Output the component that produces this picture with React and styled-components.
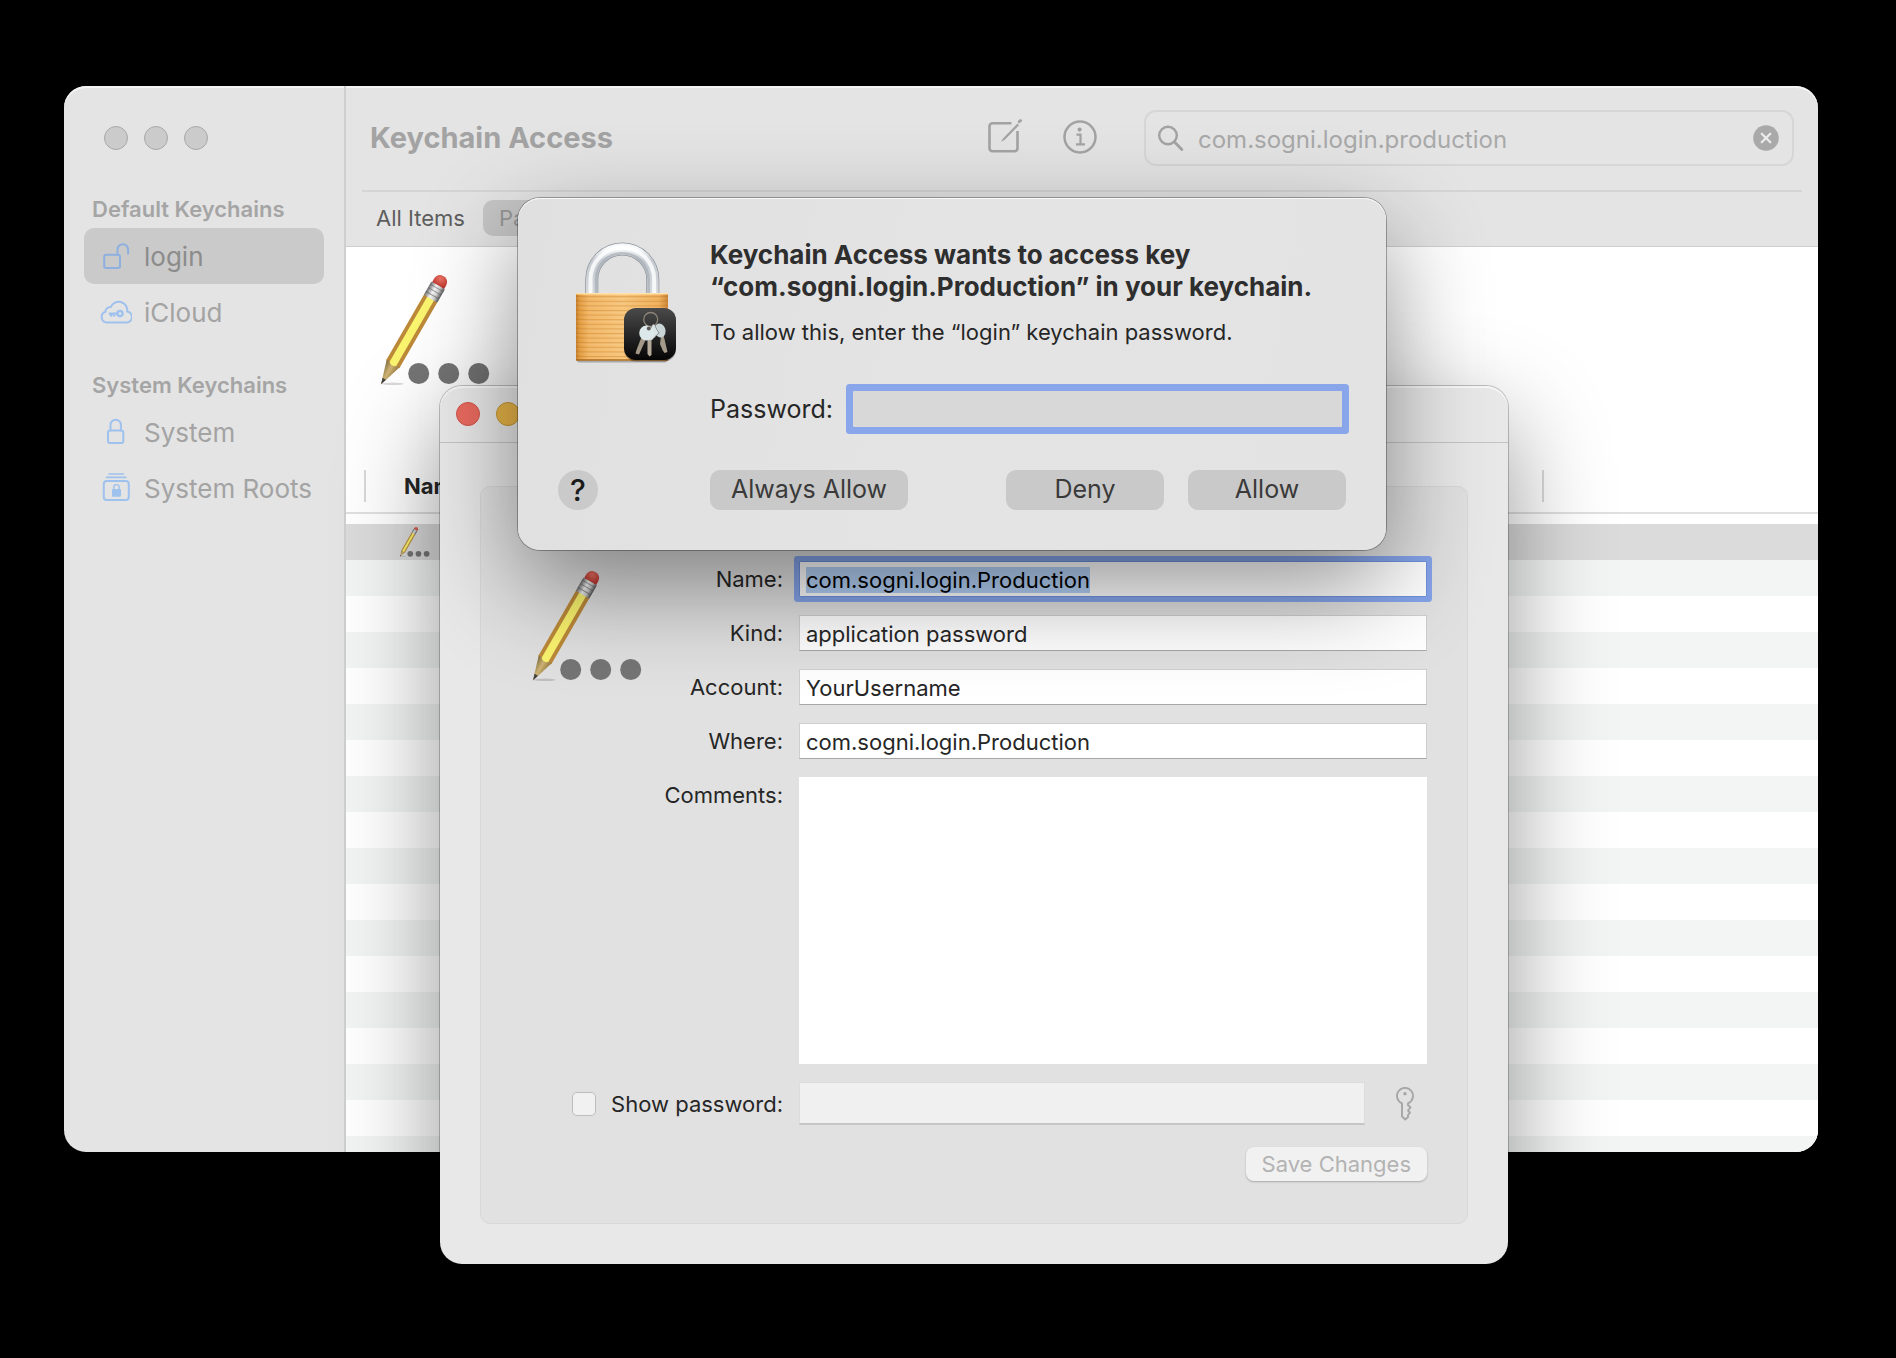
import React, { useEffect, useRef } from 'react';
import styled, { createGlobalStyle } from 'styled-components';

const ROW_COUNT = 18;

function PencilIcon({ size }) {
  return (
    <svg width={size} height={size} viewBox="0 0 110 110" aria-hidden="true">
      <defs>
        <linearGradient id="ferrule" x1="0" x2="1">
          <stop offset="0" stopColor="#6d6d6d" />
          <stop offset="0.4" stopColor="#f7f7f7" />
          <stop offset="0.7" stopColor="#cfcfcf" />
          <stop offset="1" stopColor="#555" />
        </linearGradient>
        <radialGradient id="eraser" cx="0.4" cy="0.3" r="0.8">
          <stop offset="0" stopColor="#ee7467" />
          <stop offset="1" stopColor="#b52c25" />
        </radialGradient>
        <linearGradient id="wood" x1="0" x2="1">
          <stop offset="0" stopColor="#7d6a3c" />
          <stop offset="0.5" stopColor="#d0b576" />
          <stop offset="1" stopColor="#94773d" />
        </linearGradient>
      </defs>
      <ellipse cx="12" cy="108.800" rx="11" ry="1.200" fill="#000" opacity="0.15" />
      <g transform="translate(0 109.500) rotate(30)">
        <path d="M0 0 L-7.700 -25 L7.700 -25 Z" fill="url(#wood)" />
        <path d="M0 0 L-2 -6.500 L2 -6.500 Z" fill="#444" />
        <path d="M-7.700 -23 Q-5.800 -26 -3.900 -24 Q0 -20 3.900 -24 Q5.800 -26 7.700 -23 V-100 H-7.700 Z" fill="#bd8a39" />
        <path d="M-3.900 -24 Q0 -20 3.900 -24 V-100 H-3.900 Z" fill="#fbf46f" />
        <path d="M-6.900 -113 V-118 Q-6.500 -125 0 -125 Q6.500 -125 6.900 -118 V-113 Z" fill="url(#eraser)" />
        <rect x="-7.800" y="-114.500" width="15.600" height="15.500" rx="1" fill="url(#ferrule)" />
        <path d="M-7.500 -111.500 H7.500 M-7.500 -107.500 H7.500 M-7.500 -103 H7.500" stroke="#555" strokeWidth="1" opacity="0.55" />
      </g>
      <circle cx="37.700" cy="98.500" r="10.500" fill="#757575" />
      <circle cx="67.700" cy="98.500" r="10.500" fill="#757575" />
      <circle cx="97.700" cy="98.500" r="10.500" fill="#757575" />
    </svg>
  );
}

function PadlockIcon() {
  return (
    <svg width="102" height="124" viewBox="0 0 102 124" aria-hidden="true">
      <defs>
        <linearGradient id="brass" x1="0" x2="1">
          <stop offset="0" stopColor="#c47a25" />
          <stop offset="0.040" stopColor="#e29b3f" />
          <stop offset="0.140" stopColor="#f3b765" />
          <stop offset="0.500" stopColor="#f8c67c" />
          <stop offset="0.900" stopColor="#f0b05a" />
          <stop offset="1" stopColor="#c98130" />
        </linearGradient>
        <pattern id="grooves" width="8" height="4.600" patternUnits="userSpaceOnUse">
          <rect width="8" height="1.300" fill="#b8701c" opacity="0.35" />
          <rect y="1.300" width="8" height="1" fill="#fff" opacity="0.12" />
        </pattern>
        <linearGradient id="steel" x1="0" y1="0" x2="0" y2="1">
          <stop offset="0" stopColor="#f6f8fa" />
          <stop offset="0.250" stopColor="#c6cbd1" />
          <stop offset="1" stopColor="#d6dade" />
        </linearGradient>
        <linearGradient id="badge" x1="0" y1="0" x2="0" y2="1">
          <stop offset="0" stopColor="#4a4a4a" />
          <stop offset="1" stopColor="#050505" />
        </linearGradient>
      </defs>
      <g fill="none">
        <path d="M16.800 54V38.500a30.500 30.500 0 0 1 61 0V54" stroke="#8d949c" strokeWidth="13" />
        <path d="M16.800 54V38.500a30.500 30.500 0 0 1 61 0V54" stroke="url(#steel)" strokeWidth="11.600" />
        <path d="M21 54V38.500a26.300 26.300 0 0 1 52.600 0V54" stroke="#9ea5ad" strokeWidth="2.600" opacity="0.6" />
        <path d="M15.500 54V38.500a31.800 31.800 0 0 1 63.600 0V54" stroke="#fff" strokeWidth="4" opacity="0.8" />
      </g>
      <rect x="2" y="117" width="90" height="4.500" rx="2" fill="#000" opacity="0.25" />
      <rect x="1" y="52" width="92" height="67.500" rx="1" fill="url(#brass)" />
      <rect x="1" y="55" width="92" height="63" fill="url(#grooves)" />
      <rect x="1" y="52" width="92" height="1.500" fill="#ffe3ae" />
      <rect x="1" y="118.300" width="92" height="1.300" fill="#a86518" />
      <rect x="49" y="68.500" width="52" height="52" rx="12" fill="#000" opacity="0.3" />
      <rect x="49" y="67" width="52" height="52" rx="12" fill="url(#badge)" />
      <circle cx="75.700" cy="78.500" r="7" fill="none" stroke="#8b8378" strokeWidth="1.300" />
      <path d="M86 95 L88.500 94 L92.500 111 L89.500 112 L87.500 109 L85 103 Z" fill="#a59b8b" />
      <ellipse cx="85" cy="89.500" rx="5.500" ry="7" fill="#c9d4d6" transform="rotate(-18 85 89.500)" />
      <path d="M72.500 94 H76.500 V114 L74.500 115.500 L72.500 113 Z" fill="#b5ab9b" />
      <path d="M78 83 L83 87 L84 91 L77 99 L72 98 Z" fill="#dbe5e6" />
      <path d="M66.500 96 L71 98 L64 113.500 L60.500 112.500 L61.500 109 Z" fill="#a39887" />
      <ellipse cx="71.500" cy="92" rx="7.300" ry="7.500" fill="#dce8e9" />
      <circle cx="73.800" cy="87.500" r="2" fill="#5a5651" />
      <path d="M80 85 L84 92 L79 97" fill="none" stroke="#7b8588" strokeWidth="0.900" />
    </svg>
  );
}

function OpenLockIcon() {
  return (
    <LineIcon viewBox="0 0 32 32" $color="#8db0e0" aria-hidden="true">
      <rect x="4.200" y="14.700" width="15.800" height="13.300" rx="2" />
      <path d="M17.500 14.700V9.500a5.300 5.300 0 0 1 10.600 0V13.500" />
    </LineIcon>
  );
}

function CloudKeyIcon() {
  return (
    <LineIcon viewBox="0 0 32 32" aria-hidden="true">
      <path d="M7 26.500h18.500a5.500 5.500 0 0 0 1.700-11 8.600 8.600 0 0 0-16.400-4.600 5 5 0 0 0-5.400 4.900A5.500 5.500 0 0 0 7 26.500z" />
      <circle cx="20" cy="17.600" r="2.600" strokeWidth="2.400" />
      <path d="M17 17.600H9.800M11 18v1.500M14 18v1.500" strokeWidth="2.400" />
    </LineIcon>
  );
}

function LockIcon() {
  return (
    <LineIcon viewBox="0 0 32 32" aria-hidden="true">
      <rect x="8" y="14.500" width="15.300" height="12.500" rx="2" />
      <path d="M10.500 14.500V9a5.200 5.200 0 0 1 10.400 0v5.500" />
    </LineIcon>
  );
}

function LockStackIcon() {
  return (
    <LineIcon viewBox="0 0 32 32" aria-hidden="true">
      <path d="M9 2h14.500M6.500 5.400h19.500" strokeWidth="1.600" />
      <rect x="3.800" y="9" width="25" height="19" rx="3" />
      <rect x="12" y="17" width="9" height="7.800" rx="1" fill="#9fc1ee" stroke="none" />
      <path d="M13.800 17.500v-2.200a2.700 2.700 0 0 1 5.400 0v2.200" strokeWidth="1.400" />
    </LineIcon>
  );
}

function ComposeIcon() {
  return (
    <svg width="36" height="36" viewBox="0 0 36 36" fill="none" stroke="#a3a3a3" strokeWidth="2.600" aria-hidden="true">
      <path d="M24.500 4.300H5.500a3 3 0 0 0-3 3v22a3 3 0 0 0 3 3h22a3 3 0 0 0 3-3V12" />
      <path d="M30.500 4.500L16 19.500l-2 3.200 3.500-1.700L32 6.200z" fill="#a3a3a3" stroke="none" />
      <path d="M32.300 2.700l1.200-1" strokeWidth="3" strokeLinecap="round" />
    </svg>
  );
}

function InfoIcon() {
  return (
    <svg width="34" height="34" viewBox="0 0 34 34" fill="none" stroke="#a3a3a3" strokeWidth="2.500" aria-hidden="true">
      <circle cx="17" cy="17" r="15.500" />
      <circle cx="16.600" cy="9.600" r="2.100" fill="#a3a3a3" stroke="none" />
      <path d="M13.500 14.700h4v9.500M13 24.400h9" strokeWidth="2.200" />
    </svg>
  );
}

function SearchIcon() {
  return (
    <svg width="26" height="26" viewBox="0 0 26 26" fill="none" stroke="#a3a3a3" strokeWidth="2.400" strokeLinecap="round" aria-hidden="true">
      <circle cx="10" cy="10.500" r="8.800" />
      <path d="M16.500 17l7.300 7.500" strokeWidth="2.800" />
    </svg>
  );
}

function ClearIcon() {
  return (
    <svg width="26" height="26" viewBox="0 0 26 26" aria-hidden="true">
      <circle cx="13" cy="13" r="12.800" fill="#a9a9a9" />
      <path d="M8.700 8.700l8.600 8.600M17.300 8.700l-8.600 8.600" stroke="#ececec" strokeWidth="2.200" strokeLinecap="round" />
    </svg>
  );
}

function KeyIcon() {
  return (
    <svg width="20" height="34" viewBox="0 0 20 34" fill="none" stroke="#a6a6a6" strokeWidth="1.900" strokeLinejoin="round" aria-hidden="true">
      <path d="M7 16.300A8 8 0 1 1 13 16.300V18l2.500 2.500-2.500 3 2 2.200-2 2.300v2L10.300 32.500 7 29.500z" />
      <circle cx="10" cy="6.800" r="1.700" fill="#a6a6a6" stroke="none" />
    </svg>
  );
}

function Sidebar() {
  return (
    <SidebarPane>
      <Lights>
        <Light $color="#cbcbcb" $edge="#a9a9a9" />
        <Light $color="#cbcbcb" $edge="#a9a9a9" />
        <Light $color="#cbcbcb" $edge="#a9a9a9" />
      </Lights>
      <SidebarGroup>
        <SidebarHeading>Default Keychains</SidebarHeading>
        <SidebarItem $selected><OpenLockIcon />login</SidebarItem>
        <SidebarItem><CloudKeyIcon />iCloud</SidebarItem>
      </SidebarGroup>
      <SidebarGroup>
        <SidebarHeading>System Keychains</SidebarHeading>
        <SidebarItem><LockIcon />System</SidebarItem>
        <SidebarItem><LockStackIcon />System Roots</SidebarItem>
      </SidebarGroup>
    </SidebarPane>
  );
}

function MainWindow() {
  return (
    <MainFrame>
      <Sidebar />
      <Content>
        <Toolbar>
          <Title>Keychain Access</Title>
          <Tools>
            <ToolButton aria-label="New item"><ComposeIcon /></ToolButton>
            <ToolButton aria-label="Item info"><InfoIcon /></ToolButton>
          </Tools>
          <SearchBox>
            <SearchIcon />
            <SearchInput aria-label="Search" defaultValue="com.sogni.login.production" />
            <ToolButton aria-label="Clear search"><ClearIcon /></ToolButton>
          </SearchBox>
        </Toolbar>
        <Tabs>
          <Tab>All Items</Tab>
          <Tab $selected>Passwords</Tab>
        </Tabs>
        <Preview>
          <PencilIcon size={110} />
        </Preview>
        <Table>
          <thead>
            <tr>
              <Th $width="18px" />
              <Th><HeadCell>Name</HeadCell></Th>
              <Th $width="276px"><HeadCell /></Th>
            </tr>
          </thead>
          <tbody>
            <SpacerRow><td colSpan="3" /></SpacerRow>
            {Array.from({ length: ROW_COUNT }, (_, i) => (
              <Row key={i} $selected={i === 0}>
                <td />
                <td>{i === 0 && <RowIcon><PencilIcon size={30} /></RowIcon>}</td>
                <td />
              </Row>
            ))}
          </tbody>
        </Table>
      </Content>
    </MainFrame>
  );
}

function DetailWindow() {
  const nameRef = useRef(null);

  useEffect(() => {
    nameRef.current.focus({ preventScroll: true });
    nameRef.current.select();
  }, []);

  return (
    <DetailFrame>
      <TitleBar>
        <Light $color="#ea6a5f" $edge="#d0524a" />
        <Light $color="#e8b548" $edge="#c4942f" />
        <Light $color="#61c454" $edge="#4fa443" />
      </TitleBar>
      <DetailBody>
        <Group>
          <GroupIcon><PencilIcon size={110} /></GroupIcon>
          <FieldLabel htmlFor="name" $row={1}>Name:</FieldLabel>
          <Field id="name" ref={nameRef} $focused defaultValue="com.sogni.login.Production" />
          <FieldLabel htmlFor="kind" $row={2}>Kind:</FieldLabel>
          <Field id="kind" defaultValue="application password" />
          <FieldLabel htmlFor="account" $row={3}>Account:</FieldLabel>
          <Field id="account" defaultValue="YourUsername" />
          <FieldLabel htmlFor="where" $row={4}>Where:</FieldLabel>
          <Field id="where" defaultValue="com.sogni.login.Production" />
          <FieldLabel htmlFor="comments" $row={5}>Comments:</FieldLabel>
          <Comments id="comments" />
          <CheckLabel>
            <Checkbox type="checkbox" />
            Show password:
          </CheckLabel>
          <SecretRow>
            <SecretField type="password" aria-label="Item password" disabled />
            <ToolButton aria-label="Password assistant"><KeyIcon /></ToolButton>
          </SecretRow>
          <SaveButton disabled>Save Changes</SaveButton>
        </Group>
      </DetailBody>
    </DetailFrame>
  );
}

function AccessDialog() {
  return (
    <DialogFrame role="dialog" aria-labelledby="dialog-title">
      <DialogSide>
        <PadlockIcon />
        <HelpButton aria-label="Help">?</HelpButton>
      </DialogSide>
      <DialogMain>
        <DialogTitle id="dialog-title">
          Keychain Access wants to access key<br />
          “com.sogni.login.Production” in your keychain.
        </DialogTitle>
        <DialogText>To allow this, enter the “login” keychain password.</DialogText>
        <PasswordRow>
          <label htmlFor="password">Password:</label>
          <PasswordInput id="password" type="password" />
        </PasswordRow>
        <Buttons>
          <DialogButton $wide>Always Allow</DialogButton>
          <Spacer />
          <DialogButton>Deny</DialogButton>
          <DialogButton>Allow</DialogButton>
        </Buttons>
      </DialogMain>
    </DialogFrame>
  );
}

function App() {
  return (
    <Desktop>
      <GlobalStyle />
      <MainWindow />
      <DetailWindow />
      <AccessDialog />
    </Desktop>
  );
}

const GlobalStyle = createGlobalStyle`
  * {
    box-sizing: border-box;
  }

  body {
    margin: 0;
    background: #000;
    font-family: Inter, "Liberation Sans", sans-serif;
    font-size: 22px;
    color: #262626;
  }

  button, input, textarea {
    font: inherit;
    color: inherit;
    outline: none;
  }
`;

const Desktop = styled.main`
  position: relative;
  min-height: 100vh;
  overflow: hidden;
`;

const Frame = styled.section`
  position: absolute;
  border-radius: 22px;
  overflow: hidden;
`;

const MainFrame = styled(Frame)`
  inset: 86px 78px 206px 64px;
  display: flex;
  background: #e4e4e4;
  box-shadow: inset 0 2px 0 #f4f4f4;
`;

const SidebarPane = styled.nav`
  flex: none;
  width: 282px;
  padding: 40px 20px;
  border-right: 2px solid #cfcfcf;
  display: flex;
  flex-direction: column;
  gap: 26px;
`;

const Lights = styled.div`
  display: flex;
  gap: 16px;
  padding: 0 20px 14px;
`;

const Light = styled.span`
  width: 24px;
  height: 24px;
  border-radius: 50%;
  background: ${(props) => props.$color};
  border: 1px solid ${(props) => props.$edge};
`;

const SidebarGroup = styled.div`
  display: flex;
  flex-direction: column;
`;

const SidebarHeading = styled.h2`
  margin: 0;
  padding-left: 8px;
  line-height: 38px;
  font-size: 22px;
  font-weight: 600;
  color: #a5a5a5;
`;

const SidebarItem = styled.button`
  display: flex;
  align-items: center;
  gap: 12px;
  height: 56px;
  padding: 0 12px 0 16px;
  border: 0;
  border-radius: 10px;
  font-size: 26px;
  white-space: nowrap;
  background: ${(props) => (props.$selected ? '#cacaca' : 'transparent')};
  color: ${(props) => (props.$selected ? '#8c8c8c' : '#a3a3a3')};
`;

const LineIcon = styled.svg`
  flex: none;
  width: 32px;
  height: 32px;
  fill: none;
  stroke: ${(props) => props.$color || '#9fc1ee'};
  stroke-width: 2;
  stroke-linecap: round;
`;

const Content = styled.div`
  flex: 1;
  min-width: 0;
`;

const Toolbar = styled.header`
  display: flex;
  align-items: center;
  height: 106px;
  margin: 0 16px;
  padding: 0 8px;
  border-bottom: 2px solid #d5d5d5;
`;

const Title = styled.h1`
  flex: 1;
  margin: 0;
  padding-bottom: 2px;
  font-size: 29px;
  font-weight: 700;
  color: #a3a3a3;
`;

const Tools = styled.div`
  display: flex;
  align-items: center;
  gap: 40px;
  margin-right: 47px;
  padding-bottom: 2px;
`;

const ToolButton = styled.button`
  display: flex;
  padding: 0;
  border: 0;
  background: none;
`;

const SearchBox = styled.div`
  display: flex;
  align-items: center;
  gap: 14px;
  flex: 0 1 650px;
  height: 56px;
  padding: 0 13px 0 12px;
  border: 2px solid #d6d6d6;
  border-radius: 12px;
`;

const SearchInput = styled.input`
  flex: 1;
  min-width: 0;
  padding: 2px 0 0;
  border: 0;
  background: none;
  font-size: 24px;
  color: #a9a9a9;
`;

const Tabs = styled.div`
  display: flex;
  align-items: center;
  gap: 2px;
  height: 55px;
  padding: 0 14px 2px;
  border-bottom: 1px solid #cfcfcf;
`;

const Tab = styled.button`
  height: 36px;
  padding: 0 16px;
  border: 0;
  border-radius: 10px;
  font-size: 22px;
  background: ${(props) => (props.$selected ? '#c6c6c6' : 'none')};
  color: ${(props) => (props.$selected ? '#969696' : '#5e5e5e')};
`;

const Preview = styled.div`
  height: 213px;
  padding: 28px 35px;
  background: #fff;
`;

const Table = styled.table`
  width: 100%;
  table-layout: fixed;
  border-collapse: separate;
  border-spacing: 0;
  background: #fff;
`;

const Th = styled.th`
  width: ${(props) => props.$width || 'auto'};
  height: 54px;
  padding: 0;
  border-bottom: 2px solid #e0e0e0;
`;

const HeadCell = styled.div`
  height: 32px;
  padding-left: 38px;
  border-left: 2px solid #d9d9d9;
  line-height: 32px;
  font-size: 22px;
  font-weight: 700;
  text-align: left;
`;

const SpacerRow = styled.tr`
  height: 10px;

  td {
    padding: 0;
  }
`;

const Row = styled.tr`
  height: 36px;
  background: ${(props) => (props.$selected ? '#dbdbdb' : '#fff')};

  &:nth-child(odd) {
    background: #f3f5f5;
  }

  td {
    padding: 0;
  }
`;

const RowIcon = styled.div`
  display: flex;
  padding-left: 36px;
`;

const DetailFrame = styled(Frame)`
  top: 386px;
  left: 440px;
  right: 388px;
  background: #e8e8e8;
  box-shadow:
    inset 0 2px 0 #f6f6f6,
    0 0 0 1px rgba(0, 0, 0, 0.22),
    0 36px 100px rgba(0, 0, 0, 0.42);
`;

const TitleBar = styled.header`
  display: flex;
  align-items: center;
  gap: 16px;
  height: 57px;
  padding: 0 16px;
  border-bottom: 1px solid #c4c4c4;
`;

const DetailBody = styled.div`
  padding: 43px 40px 40px;
`;

const Group = styled.form`
  display: grid;
  grid-template-columns: 302px 1fr;
  grid-template-rows: repeat(4, 36px) auto auto auto;
  gap: 18px 16px;
  padding: 74px 40px 42px 0;
  border: 1px solid #d8d8d8;
  border-radius: 10px;
  background: #e1e1e1;
`;

const GroupIcon = styled.div`
  grid-area: 1 / 1 / span 4 / span 1;
  padding: 10px 52px;
`;

const FieldLabel = styled.label`
  grid-column: 1;
  grid-row: ${(props) => props.$row};
  justify-self: end;
  line-height: 36px;
`;

const Field = styled.input`
  grid-column: 2;
  min-width: 0;
  width: 100%;
  height: 36px;
  padding: 4px 6px 3px;
  border: 1px solid #cfcfcf;
  border-bottom-color: #a8a8a8;
  background: #fff;
  ${(props) => props.$focused && `
    border-color: #6f92dd;
    border-radius: 1px;
    box-shadow: 0 0 0 5px #85a4ea;
  `}

  &::selection {
    background: #b3d0f5;
    color: #000;
  }
`;

const Comments = styled.textarea`
  grid-column: 2;
  min-width: 0;
  width: 100%;
  height: 287px;
  padding: 4px 6px;
  border: 0;
  background: #fff;
  resize: none;
`;

const CheckLabel = styled.label`
  grid-column: 1;
  display: flex;
  align-items: center;
  justify-content: flex-end;
  gap: 15px;
`;

const Checkbox = styled.input`
  appearance: none;
  width: 24px;
  height: 24px;
  margin: 0;
  border: 1px solid #bdbdbd;
  border-radius: 5px;
  background: #f1f1f1;
`;

const SecretRow = styled.div`
  grid-column: 2;
  display: flex;
  align-items: center;
  gap: 30px;
  padding-right: 12px;
`;

const SecretField = styled.input`
  flex: 1;
  min-width: 0;
  height: 43px;
  padding: 4px 6px;
  border: 1px solid #dcdcdc;
  border-bottom: 2px solid #c6c6c6;
  background: #f0f0f0;
`;

const SaveButton = styled.button`
  grid-column: 2;
  justify-self: end;
  height: 34px;
  margin-top: 4px;
  padding: 0 16px;
  border: 0;
  border-radius: 8px;
  background: #f1f1f1;
  color: #b3b3b3;
  box-shadow: 0 1px 2px rgba(0, 0, 0, 0.25);
`;

const DialogFrame = styled(Frame)`
  top: 198px;
  left: 518px;
  right: 510px;
  display: flex;
  gap: 33px;
  padding: 41px 36px 40px 40px;
  background: linear-gradient(100deg, #dfe0df, #e4e4e4 50%, #e3e3e3);
  box-shadow:
    inset 0 1px 0 #f8f8f8,
    0 0 0 1px rgba(0, 0, 0, 0.3),
    0 36px 100px rgba(0, 0, 0, 0.44);
`;

const DialogSide = styled.div`
  flex: none;
  display: flex;
  flex-direction: column;
  justify-content: space-between;
  padding-top: 2px;

  svg {
    margin-left: 17px;
  }
`;

const HelpButton = styled.button`
  width: 40px;
  height: 40px;
  padding: 0;
  border: 0;
  border-radius: 50%;
  background: #cacaca;
  font-size: 30px;
  font-weight: 500;
  line-height: 40px;
  color: #1c1c1c;
`;

const DialogMain = styled.div`
  flex: 1;
  min-width: 0;
  display: flex;
  flex-direction: column;
`;

const DialogTitle = styled.h2`
  margin: 0;
  font-size: 26px;
  font-weight: 700;
  line-height: 32px;
  color: #2e2e2e;
`;

const DialogText = styled.p`
  margin: 13px 0 0;
  line-height: 32px;
`;

const PasswordRow = styled.div`
  display: flex;
  align-items: center;
  gap: 20px;
  margin: 43px 8px 43px 0;
  font-size: 25px;
`;

const PasswordInput = styled.input`
  flex: 1;
  min-width: 0;
  height: 36px;
  padding: 0 6px;
  border: 0;
  background: #d8d8d8;
  box-shadow: 0 0 0 7px #8aa6eb;
  border-radius: 1px;
`;

const Buttons = styled.div`
  display: flex;
  gap: 24px;
  padding-right: 4px;
`;

const Spacer = styled.div`
  flex: 1;
`;

const DialogButton = styled.button`
  width: ${(props) => (props.$wide ? '198px' : '158px')};
  height: 40px;
  padding: 0 0 2px;
  border: 0;
  border-radius: 10px;
  background: #c9c9c9;
  font-size: 25px;
  color: #3a3a3a;
`;

export default App;
